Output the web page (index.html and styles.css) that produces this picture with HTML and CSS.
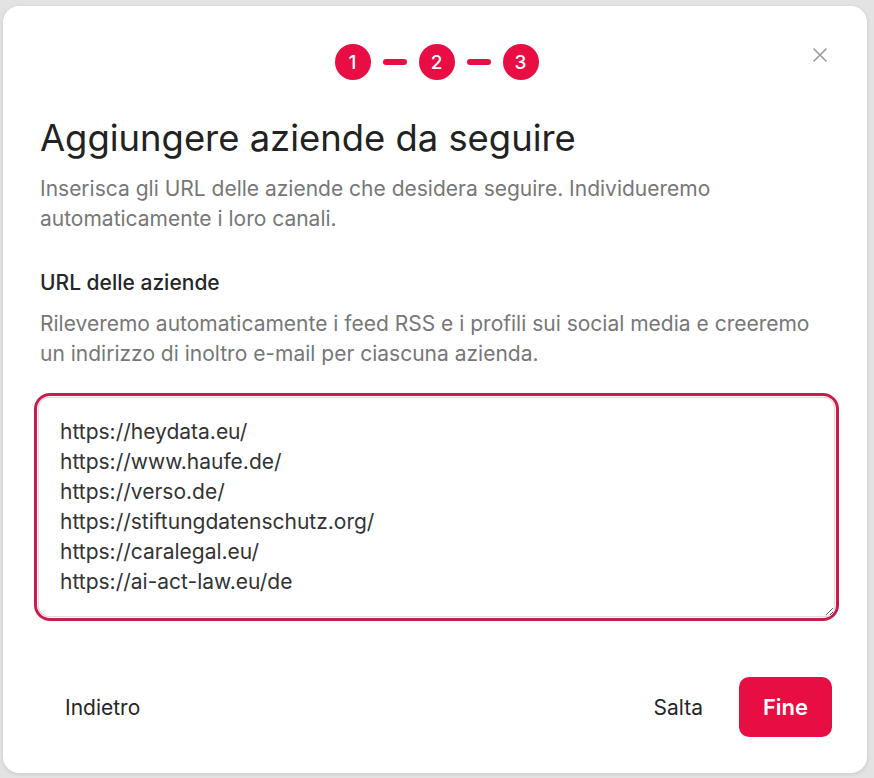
FILE: index.html
```html
<!DOCTYPE html>
<html lang="it">
<head>
<meta charset="utf-8">
<title>Aggiungere aziende da seguire</title>
<link rel="stylesheet" href="styles.css">
</head>
<body>
<div class="dialog">
  <button class="close" aria-label="Chiudi">
    <svg width="16" height="16" viewBox="0 0 16 16"><path d="M2 2L14 14M14 2L2 14" stroke="#9a9a9a" stroke-width="1.6" stroke-linecap="round" fill="none"/></svg>
  </button>
  <div class="stepper">
    <span class="step">1</span>
    <span class="dash"></span>
    <span class="step">2</span>
    <span class="dash"></span>
    <span class="step">3</span>
  </div>
  <h1 class="title">Aggiungere aziende da seguire</h1>
  <p class="lead">Inserisca gli URL delle aziende che desidera seguire. Individueremo automaticamente i loro canali.</p>
  <label class="label" for="urls">URL delle aziende</label>
  <p class="help">Rileveremo automaticamente i feed RSS e i profili sui social media e creeremo un indirizzo di inoltro e-mail per ciascuna azienda.</p>
  <div class="field">
    <textarea id="urls" class="urls">https://heydata.eu/
https://www.haufe.de/
https://verso.de/
https://stiftungdatenschutz.org/
https://caralegal.eu/
https://ai-act-law.eu/de</textarea>
  </div>
  <div class="footer">
    <button class="btn btn-ghost">Indietro</button>
    <div class="footer-right">
      <button class="btn btn-ghost">Salta</button>
      <button class="btn btn-primary">Fine</button>
    </div>
  </div>
</div>
<script src="main.js"></script>
</body>
</html>
```
FILE: styles.css
```css
* { box-sizing: border-box; }
html, body { margin: 0; padding: 0; }
body {
  background: #e3e3e3;
  font-family: Inter, "Noto Sans", sans-serif;
  color: #262626;
  width: 874px;
  height: 778px;
  overflow: hidden;
}
.dialog {
  position: relative;
  margin: 6px 0 0 3px;
  width: 864px;
  height: 767px;
  background: #fff;
  border-radius: 16px;
  box-shadow: 0 1px 4px rgba(0,0,0,0.12);
  padding: 38px 32px 0 35px;
  display: flex;
  flex-direction: column;
}
.close {
  position: absolute;
  top: 41px;
  right: 39px;
  width: 16px;
  height: 16px;
  padding: 0;
  border: 0;
  background: none;
  display: flex;
}
.stepper {
  display: flex;
  justify-content: center;
  align-items: center;
  gap: 12px;
}
.step {
  width: 36px;
  height: 36px;
  border-radius: 50%;
  background: #e80d42;
  color: #fff;
  font-size: 19px;
  font-weight: 500;
  display: flex;
  align-items: center;
  justify-content: center;
}
.dash {
  width: 24px;
  height: 6px;
  border-radius: 3px;
  background: #e80d42;
}
.title {
  margin: 36px 0 0 2px;
  font-size: 36.4px;
  line-height: 44px;
  font-weight: 400;
  color: #222;
}
.lead {
  margin: 14px 0 0 2px;
  font-size: 21px;
  line-height: 29.5px;
  color: #777;
}
.label {
  display: block;
  margin: 36px 0 0 2px;
  font-size: 21px;
  line-height: 28px;
  font-weight: 500;
  color: #262626;
}
.help {
  margin: 12px 0 0 2px;
  font-size: 21px;
  line-height: 30px;
  color: #777;
}
.field {
  margin-top: 28px;
  border-radius: 12px;
  box-shadow: 0 0 0 1px #fff, 0 0 0 4px #c81d4c;
}
.urls {
  display: block;
  width: 100%;
  height: 220px;
  border: 1px solid #dcdcdc;
  border-radius: 11px;
  padding: 19px 20px 19px 21px;
  font-family: Inter, "Noto Sans", sans-serif;
  font-size: 21px;
  line-height: 30px;
  color: #333;
  caret-color: #222;
  resize: vertical;
  outline: none;
  background: #fff;
}
.footer {
  margin-top: auto;
  margin-bottom: 36px;
  padding: 0 3px;
  display: flex;
  align-items: center;
  justify-content: space-between;
}
.footer-right {
  display: flex;
  align-items: center;
  gap: 12px;
}
.btn {
  font-family: Inter, "Noto Sans", sans-serif;
  font-size: 21px;
  border: 0;
  border-radius: 10px;
  height: 60px;
  padding: 0 24px;
  background: none;
  color: #262626;
  cursor: pointer;
}
.btn-ghost { font-weight: 400; }
.btn-primary {
  background: #e80d42;
  color: #fff;
  font-weight: 600;
  font-size: 22px;
  padding: 0;
  width: 93px;
}
```
FILE: main.js
```js
var ta = document.getElementById('urls');
ta.focus();
ta.setSelectionRange(ta.value.length, ta.value.length);
```
